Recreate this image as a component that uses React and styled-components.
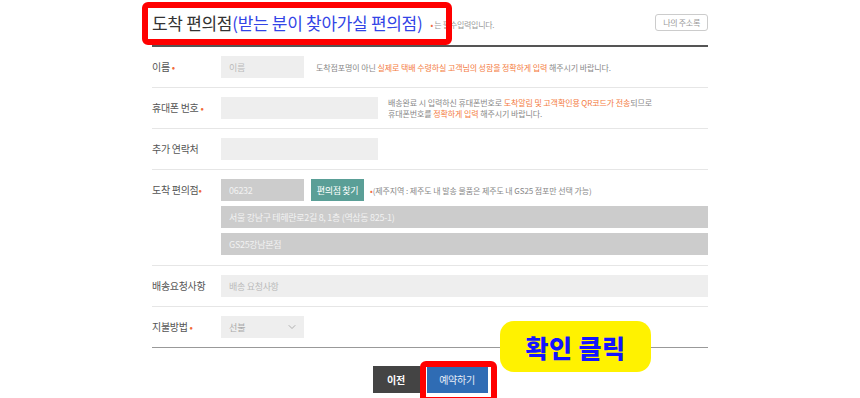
import React from "react";
import styled, { createGlobalStyle } from "styled-components";
import { ChevronDown } from "lucide-react";

const GlobalStyle = createGlobalStyle`
  html, body {
    margin: 0;
    padding: 0;
    background: #fff;
  }
  body {
    font-family: "Noto Sans CJK KR", "Noto Sans", sans-serif;
    overflow: hidden;
  }
  * { box-sizing: border-box; }
`;

const Page = styled.div`
  position: relative;
  width: 860px;
  height: 398px;
  overflow: hidden;
`;

const Wrap = styled.div`
  margin-left: 152px;
  width: 556px;
`;

const Header = styled.div`
  display: flex;
  align-items: center;
  justify-content: space-between;
  height: 47px;
  border-bottom: 2px solid #555;
`;

const TitleGroup = styled.div`
  display: flex;
  align-items: center;
`;

const Title = styled.h2`
  margin: 0;
  font-size: 17px;
  font-weight: 400;
  letter-spacing: -0.3px;
  color: #333;
  line-height: 20px;
`;

const TitleSub = styled.span`
  color: #3344e6;
`;

const Note = styled.span`
  margin-left: 8px;
  font-size: 8px;
  color: #999;
  letter-spacing: -0.3px;
  padding-top: 3px;
`;

const Dot = styled.span`
  color: #f26a3a;
`;

const AddrBook = styled.button`
  height: 17px;
  padding: 0 7px;
  background: #fff;
  border: 1px solid #ccc;
  border-radius: 3px;
  font-family: inherit;
  font-size: 8px;
  color: #999;
  letter-spacing: -0.3px;
`;

const Form = styled.div`
  border-bottom: 1px solid #999;
`;

const Row = styled.div`
  display: flex;
  align-items: ${(p) => (p.$top ? "flex-start" : "center")};
  padding: ${(p) => (p.$top ? "9px 0 10px" : "9px 0")};
  border-bottom: ${(p) => (p.$last ? "none" : "1px solid #e6e6e6")};
`;

const Label = styled.div`
  flex: 0 0 69px;
  font-size: 10px;
  line-height: 22px;
  color: #555;
  letter-spacing: -0.3px;
`;

const Field = styled.input`
  display: block;
  width: ${(p) => (p.$w ? `${p.$w}px` : "100%")};
  flex-shrink: ${(p) => (p.$w ? 0 : 1)};
  min-width: 0;
  height: 22px;
  margin: 0;
  padding: 0 8px;
  border: none;
  outline: none;
  background: ${(p) => (p.$disabled ? "#ccc" : "#eee")};
  color: ${(p) => (p.$disabled ? "#f2f2f2" : "#999")};
  font-family: inherit;
  font-size: 9px;
  letter-spacing: -0.3px;
  &::placeholder {
    color: #bbb;
  }
`;

const Help = styled.p`
  margin: 0 0 0 ${(p) => p.$gap || 12}px;
  font-size: 8px;
  line-height: 11px;
  color: #888;
  letter-spacing: -0.1px;
  white-space: nowrap;
`;

const Em = styled.span`
  color: #f47b3e;
`;

const Stack = styled.div`
  flex: 1;
  display: flex;
  flex-direction: column;
  gap: 5px;
`;

const Inline = styled.div`
  display: flex;
  align-items: center;
`;

const FindBtn = styled.button`
  flex: 0 0 53px;
  height: 22px;
  margin-left: 7px;
  padding: 0;
  border: none;
  background: #5a9f97;
  color: #fff;
  font-family: inherit;
  font-size: 9px;
  letter-spacing: -0.3px;
  white-space: nowrap;
`;

const Select = styled.div`
  width: 83px;
  height: 22px;
  padding: 0 6px 0 8px;
  display: flex;
  align-items: center;
  justify-content: space-between;
  background: #eee;
  font-size: 9px;
  color: #aaa;
`;

const Footer = styled.div`
  display: flex;
  justify-content: center;
  gap: 7px;
  padding-top: 18px;
`;

const ActionBtn = styled.button`
  width: ${(p) => p.$w}px;
  height: 27px;
  border: none;
  background: ${(p) => (p.$primary ? "#2f6cb4" : "#444")};
  color: ${(p) => (p.$primary ? "#e6edf8" : "#fff")};
  font-family: inherit;
  font-size: 10px;
  font-weight: ${(p) => (p.$primary ? 400 : 700)};
  letter-spacing: -0.3px;
`;

const RedBox = styled.div`
  position: absolute;
  border: 6px solid #ff0000;
  border-radius: 6px;
  pointer-events: none;
`;

const Badge = styled.div`
  position: absolute;
  left: 500px;
  top: 321px;
  width: 151px;
  height: 51px;
  display: flex;
  align-items: center;
  justify-content: center;
  background: #fff200;
  border-radius: 14px;
  color: #1414ff;
  font-size: 25px;
  font-weight: 900;
  letter-spacing: 0.5px;
`;

export default function App() {
  return (
    <Page>
      <GlobalStyle />
      <Wrap>
        <Header>
          <TitleGroup>
            <Title>
              도착 편의점<TitleSub>(받는 분이 찾아가실 편의점)</TitleSub>
            </Title>
            <Note>
              <Dot>•</Dot> 는 필수입력입니다.
            </Note>
          </TitleGroup>
          <AddrBook>나의 주소록</AddrBook>
        </Header>

        <Form>
          <Row>
            <Label>
              이름 <Dot>•</Dot>
            </Label>
            <Field $w={83} placeholder="이름" readOnly />
            <Help>
              도착점포명이 아닌 <Em>실제로 택배 수령하실 고객님의 성함을 정확하게 입력</Em> 해주시기 바랍니다.
            </Help>
          </Row>

          <Row>
            <Label>
              휴대폰 번호 <Dot>•</Dot>
            </Label>
            <Field $w={157} readOnly />
            <Help $gap={10}>
              배송완료 시 입력하신 휴대폰번호로 <Em>도착알림 및 고객확인용 QR코드가 전송</Em>되므로
              <br />
              휴대폰번호를 <Em>정확하게 입력</Em> 해주시기 바랍니다.
            </Help>
          </Row>

          <Row>
            <Label>추가 연락처</Label>
            <Field $w={157} readOnly />
          </Row>

          <Row $top>
            <Label>
              도착 편의점<Dot>•</Dot>
            </Label>
            <Stack>
              <Inline>
                <Field $w={83} $disabled value="06232" readOnly />
                <FindBtn>편의점 찾기</FindBtn>
                <Help $gap={6}>
                  <Dot>•</Dot>(제주지역 : 제주도 내 발송 물품은 제주도 내 GS25 점포만 선택 가능)
                </Help>
              </Inline>
              <Field $disabled value="서울 강남구 테헤란로2길 8, 1층 (역삼동 825-1)" readOnly />
              <Field $disabled value="GS25강남본점" readOnly />
            </Stack>
          </Row>

          <Row>
            <Label>배송요청사항</Label>
            <Field placeholder="배송 요청사항" readOnly />
          </Row>

          <Row $last>
            <Label>
              지불방법 <Dot>•</Dot>
            </Label>
            <Select>
              선불
              <ChevronDown size={12} color="#999" strokeWidth={1.5} />
            </Select>
          </Row>
        </Form>

        <Footer>
          <ActionBtn $w={47}>이전</ActionBtn>
          <ActionBtn $w={61} $primary>
            예약하기
          </ActionBtn>
        </Footer>
      </Wrap>

      <RedBox style={{ left: 142, top: 2, width: 310, height: 43 }} />
      <Badge>확인 클릭</Badge>
      <RedBox style={{ left: 420, top: 361, width: 77, height: 42 }} />
    </Page>
  );
}
